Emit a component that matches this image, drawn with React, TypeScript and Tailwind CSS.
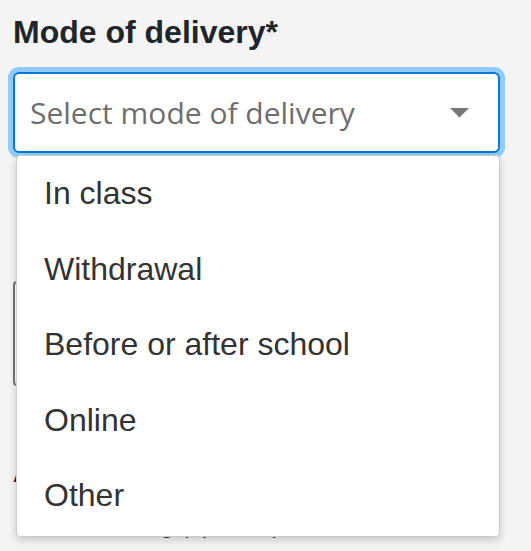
import React from "react";

const items = ["In class", "Withdrawal", "Before or after school", "Online", "Other"];

export default function App() {
  return (
    <div className="relative h-[551px] w-full overflow-hidden bg-[#f4f4f4] font-['Liberation_Sans',Arial,sans-serif]">
      <div className="px-[13px] pt-[14px]">
        <div className="text-[32px] font-bold leading-[36px] text-[#212529]">Mode of delivery*</div>
        <div className="mt-[22px] flex h-[81px] w-[487px] items-center justify-between rounded-[6px] border-2 border-[#0a78d6] bg-white pl-[15px] pr-[29px] shadow-[0_0_0_5px_#91cbfb]">
          <span className="font-['Open_Sans',sans-serif] text-[30px] leading-[40px] text-[#6e6e6e]">
            Select mode of delivery
          </span>
          <svg width="19" height="10" viewBox="0 0 19 10">
            <path d="M0 0 L19 0 L9.5 9.5 Z" fill="#777777" />
          </svg>
        </div>

        <div className="mt-[52px] pl-[2px] text-[24px] leading-[36px] text-[#9a9a9a]">Location of delivery</div>
        <div className="mt-[40px] h-[105px] w-[487px] rounded-[4px] border-2 border-[#767676] bg-white" />
        <div className="mt-[73px] text-[24px] font-bold leading-[30px] text-[#212529]">Additional details</div>
        <div className="mt-[21px] pl-[6px] text-[24px] leading-[30px] text-[#212529]">Add a meeting (optional)</div>
      </div>

      <div className="absolute left-[16px] top-[155px] w-[484px] rounded-[4px] border border-[#cccccc] bg-white pb-[2px] shadow-[0_3px_8px_rgba(0,0,0,0.18)]">
        {items.map((t) => (
          <div key={t} className="h-[75.5px] pl-[27px] text-[32px] leading-[75px] text-[#333333]">
            {t}
          </div>
        ))}
      </div>
    </div>
  );
}
